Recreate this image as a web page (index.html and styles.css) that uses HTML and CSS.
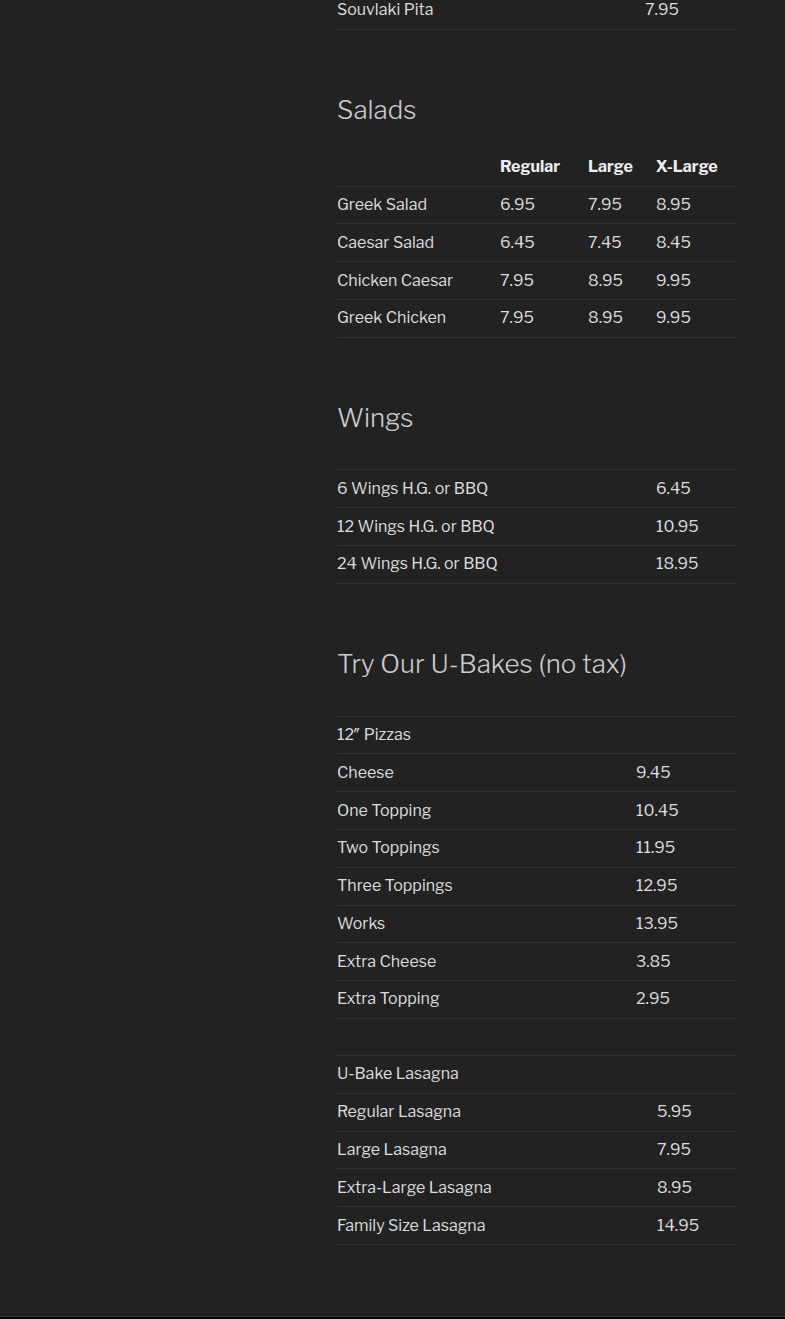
FILE: index.html
```html
<!DOCTYPE html>
<html lang="en">
<head>
<meta charset="utf-8">
<title>Menu</title>
<link rel="stylesheet" href="styles.css">
</head>
<body>
<div class="page">
  <main class="content">
    <table class="menu menu-pita">
      <tbody>
        <tr><td class="c1">Souvlaki Pita</td><td class="c2">7.95</td></tr>
      </tbody>
    </table>

    <h2>Salads</h2>
    <table class="menu menu-salads">
      <thead>
        <tr><th class="c1"></th><th class="c2">Regular</th><th class="c3">Large</th><th class="c4">X-Large</th></tr>
      </thead>
      <tbody>
        <tr><td>Greek Salad</td><td>6.95</td><td>7.95</td><td>8.95</td></tr>
        <tr><td>Caesar Salad</td><td>6.45</td><td>7.45</td><td>8.45</td></tr>
        <tr><td>Chicken Caesar</td><td>7.95</td><td>8.95</td><td>9.95</td></tr>
        <tr><td>Greek Chicken</td><td>7.95</td><td>8.95</td><td>9.95</td></tr>
      </tbody>
    </table>

    <h2>Wings</h2>
    <table class="menu menu-wings">
      <thead>
        <tr class="empty"><th class="c1"></th><th class="c2"></th></tr>
      </thead>
      <tbody>
        <tr><td>6 Wings H.G. or BBQ</td><td>6.45</td></tr>
        <tr><td>12 Wings H.G. or BBQ</td><td>10.95</td></tr>
        <tr><td>24 Wings H.G. or BBQ</td><td>18.95</td></tr>
      </tbody>
    </table>

    <h2>Try Our U-Bakes (no tax)</h2>
    <table class="menu menu-pizza">
      <thead>
        <tr class="empty"><th class="c1"></th><th class="c2"></th></tr>
      </thead>
      <tbody>
        <tr><td>12″ Pizzas</td><td></td></tr>
        <tr><td>Cheese</td><td>9.45</td></tr>
        <tr><td>One Topping</td><td>10.45</td></tr>
        <tr><td>Two Toppings</td><td>11.95</td></tr>
        <tr><td>Three Toppings</td><td>12.95</td></tr>
        <tr><td>Works</td><td>13.95</td></tr>
        <tr><td>Extra Cheese</td><td>3.85</td></tr>
        <tr><td>Extra Topping</td><td>2.95</td></tr>
      </tbody>
    </table>

    <table class="menu menu-lasagna">
      <thead>
        <tr class="empty"><th class="c1"></th><th class="c2"></th></tr>
      </thead>
      <tbody>
        <tr><td>U-Bake Lasagna</td><td></td></tr>
        <tr><td>Regular Lasagna</td><td>5.95</td></tr>
        <tr><td>Large Lasagna</td><td>7.95</td></tr>
        <tr><td>Extra-Large Lasagna</td><td>8.95</td></tr>
        <tr><td>Family Size Lasagna</td><td>14.95</td></tr>
      </tbody>
    </table>
  </main>
  <footer class="footer"></footer>
</div>
</body>
</html>
```

FILE: styles.css
```css
html, body {
  margin: 0;
  padding: 0;
  background: #222;
}
body {
  font-family: "Libre Franklin", Roboto, "Liberation Sans", sans-serif;
  font-size: 16px;
  color: #ddd;
}
.page {
  min-height: 1319px;
  display: flex;
  flex-direction: column;
}
.content {
  flex: 1;
  width: 400px;
  margin: -8px 0 0 337px;
  padding-bottom: 36px;
}
h2 {
  margin: 64px 0 23px;
  font-size: 26px;
  line-height: 32px;
  font-weight: 300;
  color: #ccc;
}
.menu {
  width: 100%;
  border-collapse: collapse;
  table-layout: fixed;
  margin: 0;
}
.menu + .menu {
  margin-top: 23.4px;
}
.menu tr {
  border-bottom: 1px solid #333;
}
.menu td, .menu th {
  box-sizing: border-box;
  padding: 6.4px 6px;
  line-height: 24px;
  text-align: left;
  vertical-align: top;
}
.menu td:first-child, .menu th:first-child {
  padding-left: 0;
}
.menu th {
  font-weight: 700;
  color: #eee;
}
.menu tr.empty th {
  padding-top: 6.4px;
  padding-bottom: 6.4px;
  line-height: 0;
  height: 0;
}
.menu-pita .c1 { width: 302px; }
.menu-salads .c1 { width: 157px; }
.menu-salads .c2 { width: 88px; }
.menu-salads .c3 { width: 68px; }
.menu-salads .c4 { width: 87px; }
.menu-wings .c1 { width: 313px; }
.menu-pizza .c1 { width: 293px; }
.menu-lasagna .c1 { width: 314px; }
.footer {
  height: 2px;
  border-top: 1px solid #333;
  background: #000;
}
```
